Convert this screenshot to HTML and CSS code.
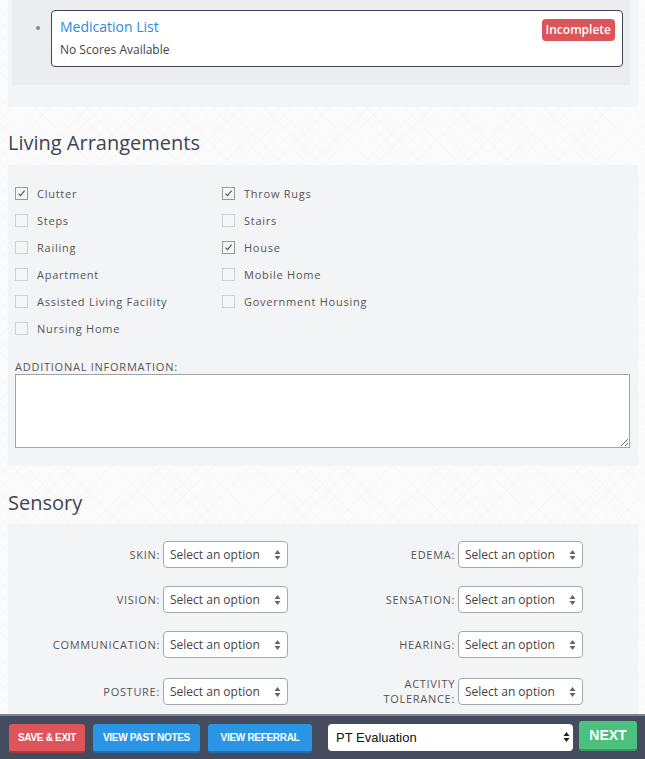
FILE: index.html
```html
<!DOCTYPE html>
<html>
<head>
<meta charset="utf-8">
<link rel="stylesheet" href="styles.css">
</head>
<body>
<div class="page">
  <section class="scores">
    <div class="scores-inner">
      <ul class="score-list">
        <li>
          <div class="score-card">
            <div class="score-text">
              <a class="score-title">Medication List</a>
              <div class="score-sub">No Scores Available</div>
            </div>
            <span class="badge">Incomplete</span>
          </div>
        </li>
      </ul>
    </div>
  </section>

  <h2 class="section-title">Living Arrangements</h2>
  <section class="panel living">
    <div class="check-grid">
      <label class="check"><span class="box checked"><svg viewBox="0 0 13 13"><path d="M3 6.6 L5.4 9 L10.2 3.2" fill="none" stroke="#555" stroke-width="1.3"/></svg></span>Clutter</label>
      <label class="check"><span class="box checked"><svg viewBox="0 0 13 13"><path d="M3 6.6 L5.4 9 L10.2 3.2" fill="none" stroke="#555" stroke-width="1.3"/></svg></span>Throw Rugs</label>
      <label class="check"><span class="box"></span>Steps</label>
      <label class="check"><span class="box"></span>Stairs</label>
      <label class="check"><span class="box"></span>Railing</label>
      <label class="check"><span class="box checked"><svg viewBox="0 0 13 13"><path d="M3 6.6 L5.4 9 L10.2 3.2" fill="none" stroke="#555" stroke-width="1.3"/></svg></span>House</label>
      <label class="check"><span class="box"></span>Apartment</label>
      <label class="check"><span class="box"></span>Mobile Home</label>
      <label class="check"><span class="box"></span>Assisted Living Facility</label>
      <label class="check"><span class="box"></span>Government Housing</label>
      <label class="check"><span class="box"></span>Nursing Home</label>
    </div>
    <div class="field-label">ADDITIONAL INFORMATION:</div>
    <textarea class="notes"></textarea>
  </section>

  <h2 class="section-title sensory-title">Sensory</h2>
  <section class="panel sensory">
    <div class="sel-grid">
      <div class="sel-label">SKIN:</div>
      <div class="sel"><span>Select an option</span><svg class="arrows" viewBox="0 0 7 12"><path d="M3.5 1 L6.5 5 L0.5 5 Z M3.5 11 L6.5 7 L0.5 7 Z" fill="#666"/></svg></div>
      <div class="sel-label">EDEMA:</div>
      <div class="sel"><span>Select an option</span><svg class="arrows" viewBox="0 0 7 12"><path d="M3.5 1 L6.5 5 L0.5 5 Z M3.5 11 L6.5 7 L0.5 7 Z" fill="#666"/></svg></div>

      <div class="sel-label">VISION:</div>
      <div class="sel"><span>Select an option</span><svg class="arrows" viewBox="0 0 7 12"><path d="M3.5 1 L6.5 5 L0.5 5 Z M3.5 11 L6.5 7 L0.5 7 Z" fill="#666"/></svg></div>
      <div class="sel-label">SENSATION:</div>
      <div class="sel"><span>Select an option</span><svg class="arrows" viewBox="0 0 7 12"><path d="M3.5 1 L6.5 5 L0.5 5 Z M3.5 11 L6.5 7 L0.5 7 Z" fill="#666"/></svg></div>

      <div class="sel-label">COMMUNICATION:</div>
      <div class="sel"><span>Select an option</span><svg class="arrows" viewBox="0 0 7 12"><path d="M3.5 1 L6.5 5 L0.5 5 Z M3.5 11 L6.5 7 L0.5 7 Z" fill="#666"/></svg></div>
      <div class="sel-label">HEARING:</div>
      <div class="sel"><span>Select an option</span><svg class="arrows" viewBox="0 0 7 12"><path d="M3.5 1 L6.5 5 L0.5 5 Z M3.5 11 L6.5 7 L0.5 7 Z" fill="#666"/></svg></div>

      <div class="sel-label">POSTURE:</div>
      <div class="sel"><span>Select an option</span><svg class="arrows" viewBox="0 0 7 12"><path d="M3.5 1 L6.5 5 L0.5 5 Z M3.5 11 L6.5 7 L0.5 7 Z" fill="#666"/></svg></div>
      <div class="sel-label">ACTIVITY<br>TOLERANCE:</div>
      <div class="sel"><span>Select an option</span><svg class="arrows" viewBox="0 0 7 12"><path d="M3.5 1 L6.5 5 L0.5 5 Z M3.5 11 L6.5 7 L0.5 7 Z" fill="#666"/></svg></div>
    </div>
  </section>
</div>

<footer class="footer">
  <button class="btn btn-red">SAVE &amp; EXIT</button>
  <button class="btn btn-blue btn-notes">VIEW PAST NOTES</button>
  <button class="btn btn-blue btn-ref">VIEW REFERRAL</button>
  <div class="note-select"><span>PT Evaluation</span><svg class="arrows" viewBox="0 0 7 12"><path d="M3.5 1 L6.5 5 L0.5 5 Z M3.5 11 L6.5 7 L0.5 7 Z" fill="#222"/></svg></div>
  <button class="btn btn-next">NEXT</button>
</footer>
</body>
</html>
```

FILE: styles.css
```css
* { box-sizing: border-box; }

body {
  margin: 0;
  font-family: "Open Sans", "Noto Sans", sans-serif;
  color: #555;
  background-color: #fbfbfb;
  background-image:
    repeating-linear-gradient(45deg, rgba(0,0,0,0.012) 0 1px, transparent 1px 9px),
    repeating-linear-gradient(-45deg, rgba(0,0,0,0.012) 0 1px, transparent 1px 9px);
}

.page {
  padding: 0 7px 60px 8px;
}

/* Scores */
.scores {
  background: #f4f5f7;
  padding: 0 8px 22px 4px;
}
.scores-inner {
  background: #ecedef;
  padding: 10px 7px 18px 0;
}
.score-list {
  margin: 0;
  padding: 0 0 0 39px;
  list-style: disc;
  color: #777;
  font-size: 12px;
}
.score-list li::marker { color: #888; }
.score-card {
  display: flex;
  justify-content: space-between;
  align-items: flex-start;
  background: #fff;
  border: 1px solid #3d4556;
  border-radius: 4px;
  padding: 6px 7px 8px 8px;
  height: 57px;
}
.score-title {
  display: block;
  color: #2b8be0;
  font-size: 14px;
  line-height: 20px;
}
.score-sub {
  color: #444;
  font-size: 12px;
  line-height: 16px;
  margin-top: 5px;
}
.badge {
  margin-top: 2px;
  background: #dc555a;
  color: #fff;
  font-size: 12px;
  font-weight: 600;
  line-height: 22px;
  padding: 0 4px;
  border-radius: 4px;
}

/* Headings */
.section-title {
  margin: 23px 0 9px 0;
  font-size: 20px;
  font-weight: 400;
  line-height: 26px;
  color: #3c4557;
}
.sensory-title {
  margin: 24px 0 8px 0;
}

.panel {
  background: #f3f4f6;
}

/* Living */
.living {
  padding: 15px 8px 18px 7px;
}
.check-grid {
  display: grid;
  grid-template-columns: 207px 1fr;
  grid-auto-rows: 27px;
}
.check {
  display: flex;
  align-items: center;
  font-size: 11px;
  letter-spacing: 0.75px;
  color: #555;
}
.box {
  width: 13px;
  height: 13px;
  border: 1px solid #cfd0d3;
  background: #f5f6f8;
  margin-right: 9px;
  display: inline-flex;
}
.box.checked { border-color: #9a9a9a; }
.box svg { width: 11px; height: 11px; }

.field-label {
  margin-top: 17px;
  font-size: 11px;
  letter-spacing: 0.75px;
  line-height: 15px;
  color: #555;
}
.notes {
  display: block;
  width: 100%;
  height: 74px;
  margin: 0;
  border: 1px solid #a3a3a6;
  background: #fff;
  resize: vertical;
}

/* Sensory */
.sensory {
  padding: 17px 0 20px 0;
}
.sel-grid {
  display: grid;
  grid-template-columns: 152px 125px 164px 125px;
  column-gap: 3px;
  row-gap: 18px;
  align-items: center;
}
.sel-label {
  text-align: right;
  font-size: 11px;
  letter-spacing: 0.7px;
  line-height: 15px;
  color: #555;
}
.sel {
  position: relative;
  height: 27px;
  background: #fff;
  border: 1px solid #a6a8ad;
  border-radius: 4px;
  padding: 0 6px;
  display: flex;
  align-items: center;
  font-size: 12px;
  color: #444;
}
.arrows {
  position: absolute;
  right: 6px;
  top: 7px;
  width: 7px;
  height: 12px;
}

/* Footer */
.footer {
  position: fixed;
  left: 0;
  right: 0;
  bottom: 0;
  height: 45px;
  background: #444b5d;
  border-top: 2px solid #7e838f;
  display: flex;
  align-items: flex-start;
  padding: 8px 8px 0 9px;
}
.btn {
  border: none;
  border-radius: 3px;
  color: #fff;
  font-family: "Liberation Sans", Arial, sans-serif;
  font-weight: 700;
  font-size: 10px;
  letter-spacing: -0.3px;
  height: 29px;
  padding: 0;
  cursor: pointer;
}
.btn-red {
  width: 76px;
  background: #dd555a;
  border-bottom: 2px solid #a83c40;
  margin-right: 8px;
}
.btn-blue {
  background: #2b95e5;
  border-bottom: 2px solid #1f6fb0;
}
.btn-notes { width: 107px; margin-right: 8px; }
.btn-ref { width: 104px; margin-right: 16px; }
.note-select {
  position: relative;
  width: 245px;
  height: 27px;
  background: #fff;
  border-radius: 4px;
  display: flex;
  align-items: center;
  padding-left: 8px;
  font-family: "Liberation Sans", Arial, sans-serif;
  font-size: 13px;
  color: #111;
  margin-right: 6px;
}
.note-select .arrows { right: 3px; top: 7px; }
.btn-next {
  width: 58px;
  height: 30px;
  margin-top: -3px;
  background: #4cc17d;
  border-bottom: 2px solid #3a9a62;
  font-size: 14px;
  letter-spacing: 0;
}
```
